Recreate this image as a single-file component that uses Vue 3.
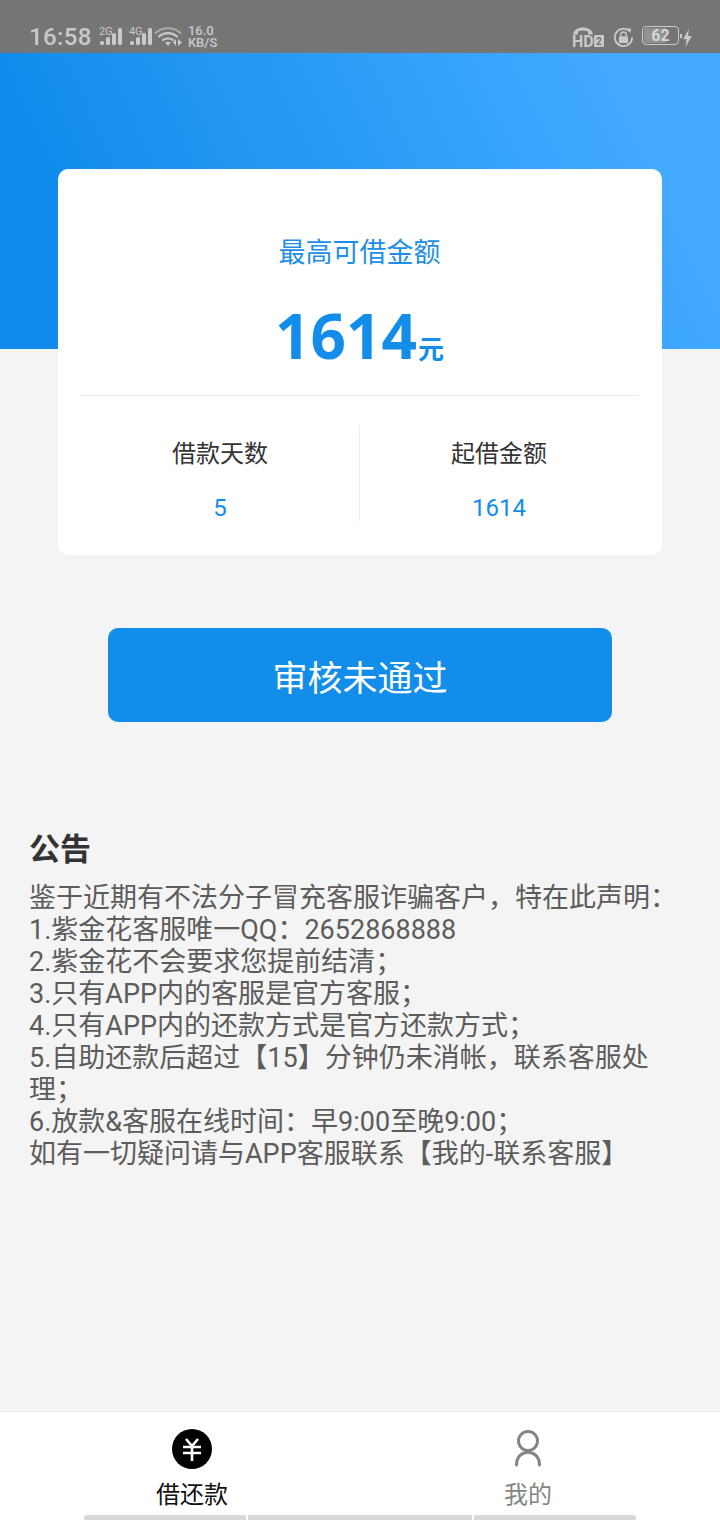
<script setup>
const notices = [
  '鉴于近期有不法分子冒充客服诈骗客户，特在此声明：',
  '1.紫金花客服唯一QQ：2652868888',
  '2.紫金花不会要求您提前结清；',
  '3.只有APP内的客服是官方客服；',
  '4.只有APP内的还款方式是官方还款方式；',
  '5.自助还款后超过【15】分钟仍未消帐，联系客服处理；',
  '6.放款&客服在线时间：早9:00至晚9:00；',
  '如有一切疑问请与APP客服联系【我的-联系客服】'
]
const signalBars = [4, 8, 12, 17]
</script>

<template>
  <div class="page">
    <div class="status-bar">
      <div class="status-left">
        <span class="clock">16:58</span>
        <div v-for="net in ['2G', '4G']" :key="net" class="signal">
          <small>{{ net }}</small>
          <svg width="24" height="17" viewBox="0 0 24 17">
            <rect v-for="(h, i) in signalBars" :key="i" :x="i * 6" :y="17 - h" width="4" :height="h" rx="1.5" fill="#c9c9c9" />
          </svg>
        </div>
        <svg class="wifi" width="29" height="21" viewBox="0 0 29 21" fill="none" stroke="#c9c9c9" stroke-linecap="round">
          <path d="M1.500 7 C8 0.500 20 0.500 26.500 7" stroke-width="2" opacity=".65" />
          <path d="M5 10.500 C10 6 18 6 23 10.500" stroke-width="2.200" />
          <path d="M9 14 C11.500 12 16.500 12 19 14" stroke-width="2.200" />
          <path d="M11 16 L17 16 L14 20 Z" fill="#c9c9c9" stroke="none" />
          <path d="M22 13 L22 20 L19 16.500 Z M24 13 L24 20 L28 16.500 Z" fill="#c9c9c9" stroke="none" />
        </svg>
        <div class="speed">
          <span>16.0</span>
          <span>KB/S</span>
        </div>
      </div>
      <div class="status-right">
        <svg width="34" height="27" viewBox="0 0 34 27" fill="#c9c9c9">
          <path d="M1 8.500 C2 -1 20 -1 21 8.500 L16 8.500 L16 5.500 C13 4 9 4 6 5.500 L6 8.500 Z" />
          <text x="0" y="21" font-family="Roboto, sans-serif" font-size="16" font-weight="700">HD</text>
          <rect x="22" y="9" width="10" height="12" rx="1" />
          <text x="24" y="19" font-family="Roboto, sans-serif" font-size="10" font-weight="700" fill="#757575">2</text>
        </svg>
        <svg class="lock" width="21" height="21" viewBox="0 0 23 23">
          <path d="M18 4.500 A9.500 9.500 0 1 0 21 11.500" fill="none" stroke="#c9c9c9" stroke-width="2" />
          <path d="M15.500 1.500 L20 2 L19 6.500 Z" fill="#c9c9c9" />
          <rect x="6.500" y="10" width="10" height="7.500" rx="1" fill="#c9c9c9" />
          <path d="M8.500 10 V8.500 A3 3 0 0 1 14.500 8.500 V10" fill="none" stroke="#c9c9c9" stroke-width="1.500" />
        </svg>
        <div class="battery">
          <div class="battery-level"></div>
          <span>62</span>
        </div>
        <i class="battery-cap"></i>
        <svg class="bolt" width="9" height="18" viewBox="0 0 9 19"><path d="M6 0 L0 10.500 L3.500 10.500 L2.500 19 L9 7.500 L5 7.500 Z" fill="#c9c9c9" /></svg>
      </div>
    </div>

    <div class="hero"></div>

    <main class="content">
      <section class="card">
        <p class="card-label">最高可借金额</p>
        <p class="amount"><strong>1614</strong><span>元</span></p>
        <div class="stats">
          <div class="stat">
            <span>借款天数</span>
            <strong>5</strong>
          </div>
          <div class="stat">
            <span>起借金额</span>
            <strong>1614</strong>
          </div>
        </div>
      </section>

      <button class="status-btn" type="button">审核未通过</button>

      <section class="notice">
        <h2>公告</h2>
        <p v-for="line in notices" :key="line">{{ line }}</p>
      </section>
    </main>

    <nav class="tabbar">
      <a class="tab active">
        <svg width="42" height="42" viewBox="0 0 42 42">
          <circle cx="21" cy="21" r="20" fill="#000" />
          <path d="M15 11 L21 18 L27 11 M12 19 H30 M12 25 H30 M21 18 V33" fill="none" stroke="#fff" stroke-width="2.600" />
        </svg>
        <span>借还款</span>
      </a>
      <a class="tab">
        <svg width="42" height="42" viewBox="0 0 42 42" fill="none" stroke="#858585" stroke-width="3" stroke-linecap="round">
          <circle cx="21" cy="13" r="9.500" />
          <path d="M9.500 37 C9.500 20 32.500 20 32.500 37" />
        </svg>
        <span>我的</span>
      </a>
      <div class="gesture">
        <i></i><i></i><i></i>
      </div>
    </nav>
  </div>
</template>

<style scoped>
.page {
  position: relative;
  width: 720px;
  height: 1520px;
  overflow: hidden;
  display: flex;
  flex-direction: column;
  background: #f4f4f4;
  font-family: Roboto, "Noto Sans CJK SC", sans-serif;
}

.status-bar {
  height: 53px;
  flex: none;
  box-sizing: border-box;
  padding: 21px 28px 0 29px;
  display: flex;
  justify-content: space-between;
  background: #757575;
  color: #c9c9c9;
}

.status-left,
.status-right {
  display: flex;
  align-items: flex-start;
}

.clock {
  font-size: 24px;
  line-height: 32px;
  margin-right: 8px;
  letter-spacing: 0.4px;
  font-weight: 500;
}

.signal {
  position: relative;
  width: 30px;
  height: 24px;
  margin-top: 3px;
}

.signal small {
  position: absolute;
  left: -1px;
  top: 2px;
  font-size: 11px;
  line-height: 11px;
}

.signal svg {
  position: absolute;
  left: 0;
  top: 4px;
}

.wifi {
  margin: 5px 0 0 -6px;
}

.speed {
  display: flex;
  flex-direction: column;
  margin: 4px 0 0 5px;
  font-size: 13px;
  line-height: 12px;
  font-weight: 500;
}

.status-right {
  padding-top: 5px;
}

.lock {
  margin: 1px 0 0 7px;
}

.battery {
  position: relative;
  width: 35px;
  height: 17px;
  margin-left: 8px;
  border: 1px solid #c9c9c9;
  border-radius: 4px;
  overflow: hidden;
  text-align: center;
  font-size: 16px;
  line-height: 17px;
  font-weight: 700;
  color: #d6d6d6;
}

.battery-level {
  position: absolute;
  left: 1px;
  top: 1px;
  bottom: 1px;
  width: 62%;
  background: #929292;
  border-radius: 2px;
}

.battery span {
  position: relative;
}

.battery-cap {
  width: 2px;
  height: 4px;
  margin: 8px 1px 0 1px;
  background: #c9c9c9;
}

.bolt {
  margin-top: 3px;
}

.hero {
  height: 296px;
  flex: none;
  background: linear-gradient(245deg, #42aaff 14%, #118cec 85%);
}

.content {
  flex: 1;
  margin-top: -180px;
  position: relative;
}

.card {
  width: 604px;
  height: 386px;
  margin: 0 auto;
  box-sizing: border-box;
  padding: 0 24px 0 23px;
  display: flex;
  flex-direction: column;
  border-radius: 10px;
  background: #fff;
}

.card-label {
  margin: 66px 0 0;
  text-align: center;
  font-size: 27px;
  line-height: 36px;
  color: #1f8fe6;
}

.amount {
  height: 74px;
  margin: 27px 0 0;
  display: flex;
  justify-content: center;
  align-items: baseline;
  color: #128dea;
  line-height: 74px;
}

.amount strong {
  font-family: "Noto Sans", sans-serif;
  font-size: 62px;
  font-weight: 700;
}

.amount span {
  margin-left: 1px;
  font-size: 26px;
  font-weight: 700;
}

.stats {
  margin-top: 23px;
  padding-top: 29px;
  display: flex;
  border-top: 1px solid #ededed;
}

.stat {
  flex: 1;
  height: 97px;
  box-sizing: border-box;
  padding-top: 12px;
  display: flex;
  flex-direction: column;
  align-items: center;
  font-size: 24px;
  line-height: 34px;
  color: #333;
}

.stat + .stat {
  border-left: 1px solid #ededed;
}

.stat strong {
  margin-top: 20px;
  font-weight: 400;
  color: #128dea;
}

.status-btn {
  display: block;
  width: 504px;
  height: 94px;
  margin: 73px auto 0;
  padding: 9px 0 0;
  border: 0;
  border-radius: 10px;
  background: #128dea;
  color: #fff;
  font: 400 35px/85px Roboto, "Noto Sans CJK SC", sans-serif;
}

.notice {
  margin-top: 106px;
  padding: 1px 40px 0 29px;
  font-size: 27px;
  line-height: 32px;
  color: #5c5c5c;
}

.notice h2 {
  margin: 0 0 11px;
  font-size: 31px;
  line-height: 42px;
  font-weight: 700;
  color: #333;
}

.notice p {
  margin: 0;
}

.tabbar {
  position: relative;
  height: 109px;
  flex: none;
  display: flex;
  box-sizing: border-box;
  padding: 0 24px;
  background: #fff;
  border-top: 1px solid #ececec;
}

.tab {
  flex: 1;
  padding-top: 16px;
  display: flex;
  flex-direction: column;
  align-items: center;
  font-size: 24px;
  line-height: 34px;
  color: #858585;
}

.tab span {
  margin-top: 8px;
}

.tab.active {
  color: #111;
}

.gesture {
  position: absolute;
  left: 84px;
  right: 84px;
  bottom: 0;
  height: 5px;
  display: flex;
  gap: 2px;
}

.gesture i {
  background: #d8d8d8;
}

.gesture i:nth-child(1) {
  width: 162px;
  border-radius: 3px 0 0 0;
}

.gesture i:nth-child(2) {
  width: 224px;
}

.gesture i:nth-child(3) {
  flex: 1;
  border-radius: 0 3px 0 0;
}
</style>
